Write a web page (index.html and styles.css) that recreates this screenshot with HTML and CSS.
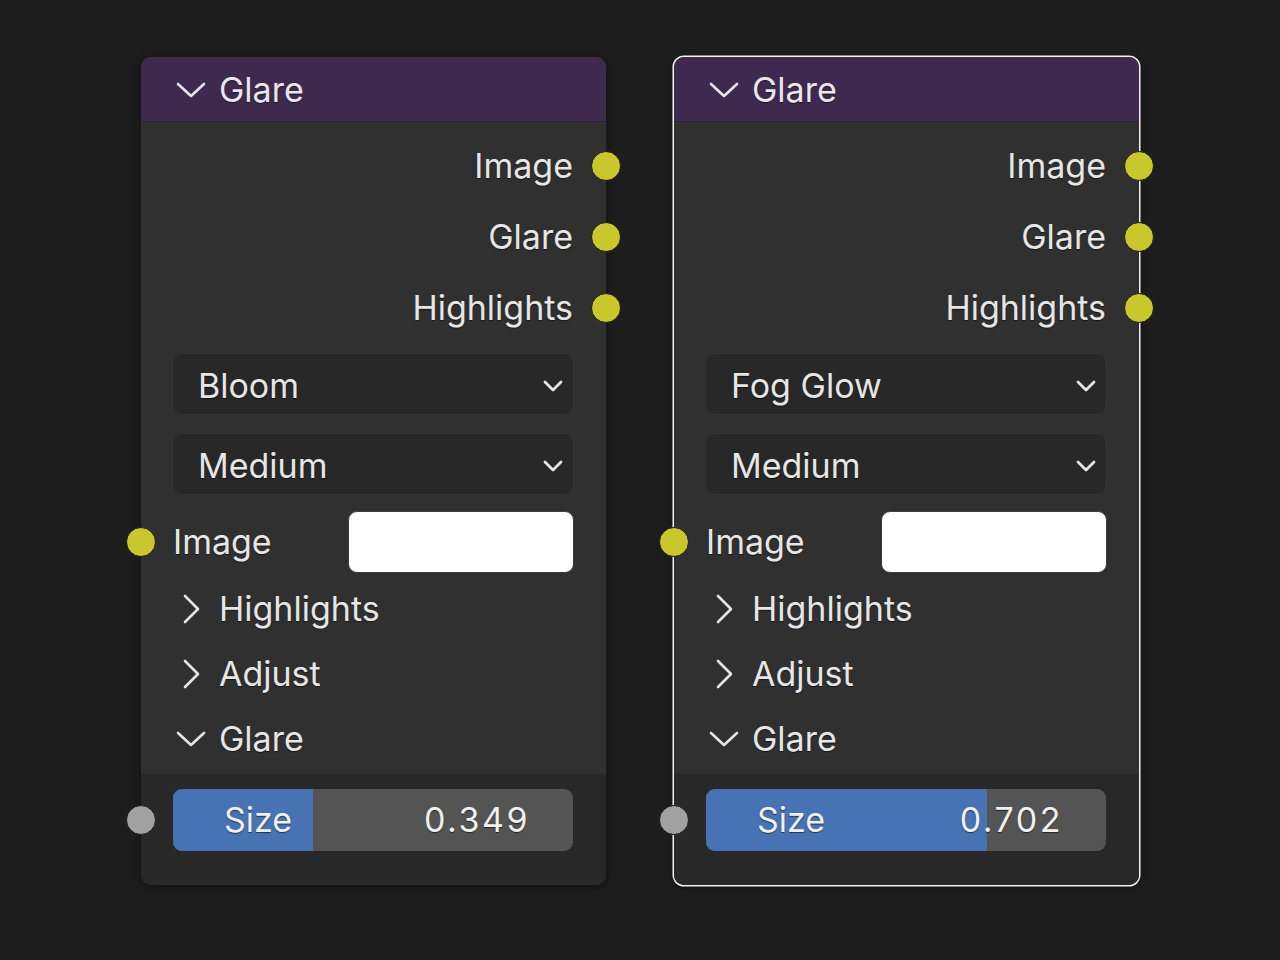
FILE: index.html
```html
<!DOCTYPE html>
<html>
<head>
<meta charset="utf-8">
<link rel="stylesheet" href="styles.css">
</head>
<body>
<div class="canvas">
  <div class="node">
    <div class="header">
      <svg class="chev-down" width="30" height="16" viewBox="0 0 30 16"><polyline points="2,2 15,14 28,2"/></svg>
      <span class="title">Glare</span>
    </div>
    <div class="body">
      <div class="row out"><span class="label">Image</span><span class="socket yellow right"></span></div>
      <div class="row out"><span class="label">Glare</span><span class="socket yellow right"></span></div>
      <div class="row out"><span class="label">Highlights</span><span class="socket yellow right"></span></div>
      <div class="dropdown first"><span>Bloom</span><svg class="chev-small" width="20" height="12" viewBox="0 0 20 12"><polyline points="2,2 10,10 18,2"/></svg></div>
      <div class="dropdown"><span>Medium</span><svg class="chev-small" width="20" height="12" viewBox="0 0 20 12"><polyline points="2,2 10,10 18,2"/></svg></div>
      <div class="row input"><span class="socket yellow left"></span><span class="label">Image</span><span class="color-box"></span></div>
      <div class="row panel"><span class="chev-box"><svg width="17" height="30" viewBox="0 0 17 30"><polyline points="2,2 15,15 2,28"/></svg></span><span class="label">Highlights</span></div>
      <div class="row panel"><span class="chev-box"><svg width="17" height="30" viewBox="0 0 17 30"><polyline points="2,2 15,15 2,28"/></svg></span><span class="label">Adjust</span></div>
      <div class="row panel"><span class="chev-box"><svg width="30" height="16" viewBox="0 0 30 16"><polyline points="2,2 15,14 28,2"/></svg></span><span class="label">Glare</span></div>
    </div>
    <div class="panel-body">
      <div class="slider-row">
        <span class="socket grey left"></span>
        <div class="slider">
          <div class="fill" style="width: 34.9%"></div>
          <span class="s-label">Size</span>
          <span class="s-value">0.349</span>
        </div>
      </div>
    </div>
  </div>

  <div class="node selected">
    <div class="header">
      <svg class="chev-down" width="30" height="16" viewBox="0 0 30 16"><polyline points="2,2 15,14 28,2"/></svg>
      <span class="title">Glare</span>
    </div>
    <div class="body">
      <div class="row out"><span class="label">Image</span><span class="socket yellow right"></span></div>
      <div class="row out"><span class="label">Glare</span><span class="socket yellow right"></span></div>
      <div class="row out"><span class="label">Highlights</span><span class="socket yellow right"></span></div>
      <div class="dropdown first"><span>Fog Glow</span><svg class="chev-small" width="20" height="12" viewBox="0 0 20 12"><polyline points="2,2 10,10 18,2"/></svg></div>
      <div class="dropdown"><span>Medium</span><svg class="chev-small" width="20" height="12" viewBox="0 0 20 12"><polyline points="2,2 10,10 18,2"/></svg></div>
      <div class="row input"><span class="socket yellow left"></span><span class="label">Image</span><span class="color-box"></span></div>
      <div class="row panel"><span class="chev-box"><svg width="17" height="30" viewBox="0 0 17 30"><polyline points="2,2 15,15 2,28"/></svg></span><span class="label">Highlights</span></div>
      <div class="row panel"><span class="chev-box"><svg width="17" height="30" viewBox="0 0 17 30"><polyline points="2,2 15,15 2,28"/></svg></span><span class="label">Adjust</span></div>
      <div class="row panel"><span class="chev-box"><svg width="30" height="16" viewBox="0 0 30 16"><polyline points="2,2 15,14 28,2"/></svg></span><span class="label">Glare</span></div>
    </div>
    <div class="panel-body">
      <div class="slider-row">
        <span class="socket grey left"></span>
        <div class="slider">
          <div class="fill" style="width: 70.2%"></div>
          <span class="s-label">Size</span>
          <span class="s-value">0.702</span>
        </div>
      </div>
    </div>
  </div>
</div>
</body>
</html>
```

FILE: styles.css
```css
html, body {
  margin: 0;
  padding: 0;
  background: #1d1d1d;
  width: 1280px;
  height: 960px;
  overflow: hidden;
}

body {
  font-family: Inter, "Noto Sans", "DejaVu Sans", sans-serif;
  color: #e6e6e6;
  font-size: 34px;
}

.canvas {
  display: flex;
  gap: 68px;
  padding: 57px 0 0 141px;
  align-items: flex-start;
}

.node {
  width: 465px;
  background: #303030;
  border-radius: 10px;
  box-shadow: 0 2px 10px rgba(0, 0, 0, 0.45);
}

.node.selected {
  box-shadow: 0 0 0 1.5px #f2f2f2, 0 2px 10px rgba(0, 0, 0, 0.45);
}

.header {
  height: 65px;
  box-sizing: border-box;
  background: #40294f;
  border-radius: 10px 10px 0 0;
  border-bottom: 1px solid #2c2234;
  display: flex;
  align-items: center;
  padding-left: 35px;
  gap: 13px;
}

.header .title {
  color: #e9e6ec;
  text-shadow: 0 1px 1px rgba(0, 0, 0, 0.5);
  line-height: 1;
  padding-top: 1px;
}

svg polyline {
  fill: none;
  stroke: #e6e6e6;
  stroke-width: 2.6;
  stroke-linecap: round;
  stroke-linejoin: round;
}

.chev-down {
  margin-top: 1px;
}

.body {
  padding: 8px 33px 0 32px;
}

.row {
  position: relative;
  display: flex;
  align-items: center;
}

.label {
  text-shadow: 0 1px 1px rgba(0, 0, 0, 0.55);
  line-height: 1;
}

.row.out {
  height: 71px;
  justify-content: flex-end;
}

.socket {
  position: absolute;
  width: 28px;
  height: 28px;
  border-radius: 50%;
  border: 1px solid #1b1b1b;
  top: 50%;
  margin-top: -15px;
}

.socket.yellow {
  background: #c9c72c;
}

.socket.grey {
  background: #a1a1a1;
}

.socket.right {
  right: -48px;
}

.socket.left {
  left: -47px;
}

.dropdown {
  height: 62px;
  box-sizing: border-box;
  margin: 10px -1px 0 -1px;
  background: #282828;
  border: 1px solid #363636;
  border-radius: 10px;
  display: flex;
  align-items: center;
  justify-content: space-between;
  padding: 3px 10px 0 25px;
}

.dropdown span {
  text-shadow: 0 1px 1px rgba(0, 0, 0, 0.55);
  line-height: 1;
}

.dropdown + .dropdown {
  margin-top: 18px;
}

.chev-small polyline {
  stroke-width: 2.8;
}

.row.input {
  height: 61px;
  margin-top: 16px;
  justify-content: space-between;
}

.color-box {
  width: 226px;
  height: 62px;
  box-sizing: border-box;
  background: #ffffff;
  border: 1px solid #3c3c3c;
  border-radius: 9px;
  margin-right: -1px;
}

.row.panel {
  height: 65px;
  padding-left: 3px;
  gap: 13px;
}

.chev-box {
  width: 30px;
  display: flex;
  justify-content: center;
  align-items: center;
}

.input + .panel {
  margin-top: 4px;
}

.panel-body {
  background: #282828;
  margin-top: 3px;
  padding: 15px 33px 34px 32px;
  border-radius: 0 0 10px 10px;
}

.slider-row {
  position: relative;
}

.slider {
  position: relative;
  height: 62px;
  background: #545454;
  border-radius: 9px;
  overflow: hidden;
  display: flex;
  align-items: center;
  justify-content: space-between;
  padding: 0 43px 0 51px;
  color: #f0f0f0;
}

.fill {
  position: absolute;
  left: 0;
  top: 0;
  bottom: 0;
  background: #4772b3;
}

.s-label, .s-value {
  position: relative;
  line-height: 1;
  text-shadow: 0 1px 1px rgba(0, 0, 0, 0.55);
}

.s-value {
  letter-spacing: 2.5px;
}
```
